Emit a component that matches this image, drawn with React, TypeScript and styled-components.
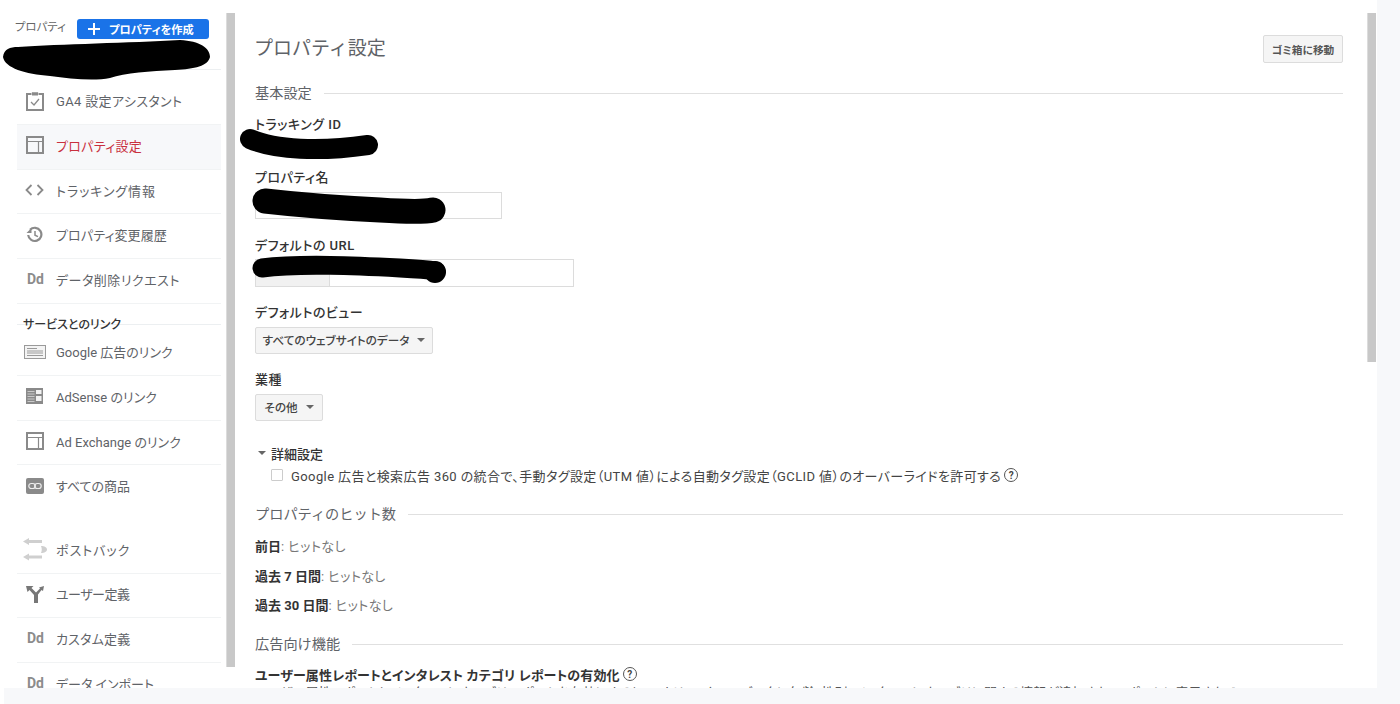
import React from "react";
import styled, { createGlobalStyle } from "styled-components";

const Global = createGlobalStyle`
  html, body { margin: 0; padding: 0; background: #f7f8fa; }
  body { font-family: Roboto, "Noto Sans CJK JP", sans-serif; color: #333; overflow: hidden; font-feature-settings: "palt"; }
`;

const Page = styled.div`
  width: 1400px;
  height: 704px;
  overflow: hidden;
  background: #f7f8fa;
`;
const Frame = styled.div`
  position: relative;
  width: 1377px;
  height: 688px;
  background: #fff;
  overflow: hidden;
  display: flex;
`;
const Gutter = styled.div`
  width: 4px;
  height: 16px;
  background: #fff;
`;
const Nav = styled.nav`
  width: 226px;
  flex: none;
  padding-left: 17px;
  box-sizing: border-box;
`;
const NavHeader = styled.div`
  height: 70px;
  margin-left: -17px;
  margin-bottom: 10.6px;
  padding: 19px 17px 0 15px;
  box-sizing: border-box;
  display: flex;
  align-items: flex-start;
  justify-content: space-between;
  position: relative;
  &::after {
    content: "";
    position: absolute;
    left: 17px;
    right: 5px;
    bottom: 0;
    border-bottom: 1px solid #eceff1;
  }
`;
const NavTitle = styled.span`
  font-size: 11.4px;
  line-height: 16px;
  color: #666;
`;
const CreateButton = styled.div`
  width: 132px;
  height: 20px;
  background: #1a73e8;
  border-radius: 3px;
  color: #fff;
  font-size: 11.2px;
  font-weight: 700;
  display: flex;
  align-items: center;
  padding-left: 11px;
  gap: 9px;
  box-sizing: border-box;
`;
const Row = styled.div<{ $active?: boolean; $plain?: boolean; $spread?: number }>`
  height: 44.6px;
  width: 204px;
  padding-bottom: 3px;
  box-sizing: border-box;
  display: flex;
  align-items: center;
  border-bottom: 1px solid ${(p) => (p.$plain ? "transparent" : "#f1f3f4")};
  background: ${(p) => (p.$active ? "#f7f8fa" : "transparent")};
  color: ${(p) => (p.$active ? "#c9303e" : "#5f6368")};
  font-size: 13px;
  letter-spacing: ${(p) => p.$spread ?? 0}px;
`;
const IconSlot = styled.span`
  width: 35px;
  margin-right: 4px;
  flex: none;
  display: flex;
  justify-content: center;
  color: #8a8a8a;
`;
const Dd = styled.span`
  font-family: Roboto, sans-serif;
  font-size: 14px;
  font-weight: 700;
  letter-spacing: 0;
  color: #8c8c8c;
  line-height: 16px;
  margin-left: 2px;
`;
const SectionLabel = styled.div`
  width: 204px;
  height: 21px;
  padding: 11px 0 0 6px;
  box-sizing: border-box;
  font-size: 12px;
  line-height: 20px;
  font-weight: 500;
  color: #333;
  border-bottom: 1px solid #eceff1;
  margin-bottom: 7px;
  white-space: nowrap;
`;
const NavGap = styled.div`
  height: 19px;
`;
const Track = styled.div<{ $height: number }>`
  width: 9px;
  flex: none;
  margin-top: 13px;
  height: ${(p) => p.$height}px;
  background: #c8c8c8;
  border-left: 1px solid #dcdcdc;
  box-sizing: border-box;
`;
const Main = styled.main`
  flex: none;
  width: 1132px;
  padding: 34px 24px 0 20px;
  box-sizing: border-box;
`;
const TitleRow = styled.div`
  display: flex;
  align-items: flex-start;
  justify-content: space-between;
  height: 47px;
`;
const Title = styled.h1`
  margin: 2px 0 0 -1px;
  font-size: 19px;
  line-height: 26px;
  font-weight: 400;
  color: #5f6368;
  font-feature-settings: normal;
`;
const GhostButton = styled.div`
  width: 80px;
  height: 28px;
  margin-top: 1px;
  background: #f5f5f5;
  border: 1px solid #dcdcdc;
  border-radius: 2px;
  box-sizing: border-box;
  display: flex;
  align-items: center;
  justify-content: center;
  font-size: 10.7px;
  font-weight: 700;
  color: #555;
`;
const Section = styled.div<{ $top?: number }>`
  display: flex;
  align-items: center;
  gap: 12px;
  height: 22px;
  margin-top: ${(p) => p.$top ?? 0}px;
  font-size: 14.2px;
  font-feature-settings: normal;
  color: #5f6368;
  white-space: nowrap;
  &::after {
    content: "";
    flex: 1;
    margin-top: 2px;
    border-top: 1px solid #e0e0e0;
  }
`;
const Label = styled.div<{ $top: number }>`
  margin-top: ${(p) => p.$top}px;
  font-size: 13px;
  letter-spacing: 0.5px;
  line-height: 18px;
  font-weight: 500;
  color: #333;
`;
const TextField = styled.div<{ $width: number; $top: number; $height: number }>`
  width: ${(p) => p.$width}px;
  height: ${(p) => p.$height}px;
  margin-top: ${(p) => p.$top}px;
  border: 1px solid #dcdcdc;
  box-sizing: border-box;
  display: flex;
`;
const FieldPrefix = styled.div`
  width: 73px;
  background: #f1f1f1;
  border-right: 1px solid #dcdcdc;
`;
const SelectBox = styled.div<{ $width: number }>`
  width: ${(p) => p.$width}px;
  height: 27px;
  margin-top: 5px;
  padding-bottom: 2px;
  background: #f5f5f5;
  border: 1px solid #dcdcdc;
  border-radius: 2px;
  box-sizing: border-box;
  display: flex;
  align-items: center;
  justify-content: center;
  gap: 8px;
  font-size: 11.6px;
  font-weight: 500;
  color: #444;
`;
const Caret = styled.span`
  width: 0;
  height: 0;
  border-left: 4px solid transparent;
  border-right: 4px solid transparent;
  border-top: 4px solid #666;
`;
const Disclosure = styled.div`
  margin-top: 23px;
  padding-left: 3px;
  height: 18px;
  display: flex;
  align-items: center;
  gap: 5px;
  font-size: 13px;
  font-weight: 500;
  color: #333;
`;
const CheckRow = styled.div`
  margin-top: 4px;
  padding-left: 16px;
  height: 18px;
  display: flex;
  align-items: center;
  gap: 8px;
  font-size: 13px;
  letter-spacing: 0.4px;
  color: #444;
  white-space: nowrap;
`;
const CheckText = styled.span`
  display: inline-flex;
  align-items: center;
`;
const Checkbox = styled.span`
  width: 12px;
  height: 12px;
  border: 1px solid #ccc;
  border-radius: 1px;
  box-sizing: border-box;
`;
const Help = styled.span`
  width: 14px;
  height: 14px;
  border: 1.5px solid #555;
  border-radius: 50%;
  box-sizing: border-box;
  display: inline-flex;
  align-items: center;
  justify-content: center;
  font-family: Roboto, sans-serif;
  font-size: 10px;
  font-weight: 700;
  letter-spacing: 0;
  color: #444;
  margin-left: 3px;
  flex: none;
`;
const Stat = styled.div<{ $top: number }>`
  margin-top: ${(p) => p.$top}px;
  height: 18px;
  line-height: 18px;
  font-size: 13px;
  letter-spacing: 0.4px;
  color: #777;
  b { color: #333; font-weight: 700; letter-spacing: 0; }
`;
const BoldLine = styled.div`
  margin-top: 11px;
  height: 18px;
  display: flex;
  align-items: center;
  font-size: 13px;
  letter-spacing: 0.13px;
  font-weight: 700;
  color: #333;
  white-space: nowrap;
`;
const Clipped = styled.div`
  margin-top: 1px;
  font-size: 13px;
  line-height: 18px;
  color: #555;
  white-space: nowrap;
  width: 985px;
  overflow: hidden;
`;
const Redactions = styled.svg`
  position: absolute;
  left: 0;
  top: 0;
  pointer-events: none;
`;

const Stroke = { fill: "none", stroke: "currentColor", strokeWidth: 2 };

const ClipboardIcon = () => (
  <svg width="18" height="20" viewBox="0 0 18 20" {...Stroke}>
    <path d="M5 3H1v16h16V3h-4" />
    <path d="M6 4V1.800h6V4z" fill="currentColor" strokeWidth="1" />
    <path d="M5 11l3 3 5-6" strokeWidth="1.300" />
  </svg>
);
const PanelIcon = () => (
  <svg width="18" height="18" viewBox="0 0 18 18" {...Stroke}>
    <rect x="1" y="1" width="16" height="16" />
    <path d="M1 5.500h16M12.500 5.500V17" strokeWidth="1.200" />
  </svg>
);
const CodeIcon = () => (
  <svg width="19" height="12" viewBox="0 0 19 12" fill="none" stroke="currentColor" strokeWidth="1.800">
    <path d="M6.500 1L1.500 6l5 5M12.500 1l5 5-5 5" />
  </svg>
);
const HistoryIcon = () => (
  <svg width="17" height="17" viewBox="0 0 17 17" {...Stroke}>
    <path d="M2.200 9A6.600 6.600 0 1 0 4 3.800" strokeWidth="2.200" />
    <path d="M0.500 7h5V2z" fill="currentColor" stroke="none" />
    <path d="M9 5v4.200l3 1.500" strokeWidth="1.500" />
  </svg>
);
const AdsIcon = () => (
  <svg width="22" height="14" viewBox="0 0 22 14" fill="none" stroke="#9a9a9a">
    <rect x=".5" y=".5" width="21" height="13" fill="#f4f4f4" />
    <path d="M3 3.500h10M3 6h16M3 8h16M3 10.500h16" strokeWidth="1.200" />
  </svg>
);
const AdsenseIcon = () => (
  <svg width="17" height="16" viewBox="0 0 17 16" fill="#8a8a8a">
    <rect width="17" height="16" />
    <path d="M10 2h5.500v4H10zM10 8h5.500v5H10z" fill="#f2f2f2" />
    <path d="M1.500 3.500h7M1.500 6h7M1.500 8.500h7M1.500 11h7M1.500 13.500h7" stroke="#c9c9c9" />
  </svg>
);
const LinkIcon = () => (
  <svg width="18" height="16" viewBox="0 0 18 16">
    <rect width="18" height="16" rx="2" fill="#8a8a8a" />
    <rect x="2.800" y="5.500" width="6.500" height="5" rx="2.500" fill="none" stroke="#eee" strokeWidth="1.200" />
    <rect x="8.700" y="5.500" width="6.500" height="5" rx="2.500" fill="none" stroke="#eee" strokeWidth="1.200" />
  </svg>
);
const PostbackIcon = () => (
  <svg width="24" height="23" viewBox="0 0 24 23" fill="#cfcfcf">
    <path d="M0 3.500L6 0v2h13v3H6v2zM0 19l6-3.500v2h13v3H6v2z" />
    <path d="M18 8c3.500 0 6 1.500 6 3.500S21.500 15 18 15c1-2.300 1-4.700 0-7z" />
  </svg>
);
const ForkIcon = () => (
  <svg width="18" height="18" viewBox="0 0 18 18" fill="#777">
    <path d="M0 1h7.500L5.500 3 10 7.500 14 3.500 13 2.500 18 1l-1 5-1.500-1L12 9.500V18H8v-8L3.500 5 1.500 7z" />
  </svg>
);

const Icons: Record<string, React.ReactNode> = {
  clip: <ClipboardIcon />,
  panel: <PanelIcon />,
  code: <CodeIcon />,
  history: <HistoryIcon />,
  dd: <Dd>Dd</Dd>,
  ads: <AdsIcon />,
  adsense: <AdsenseIcon />,
  link: <LinkIcon />,
  post: <PostbackIcon />,
  fork: <ForkIcon />,
};

type NavRowProps = { icon: string; label: string; active?: boolean; plain?: boolean; spread?: number };
const NavRow = ({ icon, label, active, plain, spread }: NavRowProps) => (
  <Row $active={active} $plain={plain} $spread={spread}>
    <IconSlot>{Icons[icon]}</IconSlot>
    <span>{label}</span>
  </Row>
);

export default function App() {
  return (
    <Page>
      <Global />
      <Frame>
        <Nav>
          <NavHeader>
            <NavTitle>プロパティ</NavTitle>
            <CreateButton>
              <svg width="12" height="12" viewBox="0 0 12 12" stroke="#fff" strokeWidth="2">
                <path d="M6 0v12M0 6h12" />
              </svg>
              プロパティを作成
            </CreateButton>
          </NavHeader>
          <NavRow icon="clip" label="GA4 設定アシスタント" spread={0.35} />
          <NavRow icon="panel" label="プロパティ設定" active spread={0.3} />
          <NavRow icon="code" label="トラッキング情報" spread={0.9} />
          <NavRow icon="history" label="プロパティ変更履歴" spread={0.1} />
          <NavRow icon="dd" label="データ削除リクエスト" spread={0.5} />
          <SectionLabel>サービスとのリンク</SectionLabel>
          <NavRow icon="ads" label="Google 広告のリンク" />
          <NavRow icon="adsense" label="AdSense のリンク" />
          <NavRow icon="panel" label="Ad Exchange のリンク" />
          <NavRow icon="link" label="すべての商品" plain />
          <NavGap />
          <NavRow icon="post" label="ポストバック" spread={1} />
          <NavRow icon="fork" label="ユーザー定義" spread={-0.5} />
          <NavRow icon="dd" label="カスタム定義" spread={0.2} />
          <NavRow icon="dd" label="データ インポート" />
        </Nav>
        <Track $height={654} />
        <Main>
          <TitleRow>
            <Title>プロパティ設定</Title>
            <GhostButton>ゴミ箱に移動</GhostButton>
          </TitleRow>
          <Section>基本設定</Section>
          <Label $top={13}>トラッキング ID</Label>
          <Label $top={35}>プロパティ名</Label>
          <TextField $width={247} $top={5} $height={27} />
          <Label $top={18}>デフォルトの URL</Label>
          <TextField $width={319} $top={4} $height={28}>
            <FieldPrefix />
          </TextField>
          <Label $top={17}>デフォルトのビュー</Label>
          <SelectBox $width={178}>
            すべてのウェブサイトのデータ
            <Caret />
          </SelectBox>
          <Label $top={17}>業種</Label>
          <SelectBox $width={68}>
            その他
            <Caret />
          </SelectBox>
          <Disclosure>
            <Caret />
            詳細設定
          </Disclosure>
          <CheckRow>
            <Checkbox />
            <CheckText>
              Google 広告と検索広告 360 の統合で、手動タグ設定（UTM 値）による自動タグ設定（GCLID 値）のオーバーライドを許可する
              <Help>?</Help>
            </CheckText>
          </CheckRow>
          <Section $top={18}>プロパティのヒット数</Section>
          <Stat $top={14}>
            <b>前日</b>: ヒットなし
          </Stat>
          <Stat $top={12}>
            <b>過去 7 日間</b>: ヒットなし
          </Stat>
          <Stat $top={11}>
            <b>過去 30 日間</b>: ヒットなし
          </Stat>
          <Section $top={17}>広告向け機能</Section>
          <BoldLine>
            ユーザー属性レポートとインタレスト カテゴリ レポートの有効化
            <Help>?</Help>
          </BoldLine>
          <Clipped>
            ユーザー属性レポートとインタレスト カテゴリ レポートを有効にすると、アナリティクスのデータに年齢、性別、インタレスト カテゴリに関する情報が追加され、レポートに表示されるようになります。
          </Clipped>
        </Main>
        <Track $height={349} />
        <Redactions width="1377" height="688" viewBox="0 0 1377 688">
          <path
            d="M3 57C4 49 10 47 18 47C60 44 130 43 180 40C200 41 210 48 210 57C208 66 195 69 175 70C150 71 125 73 110 78C95 81 70 79 50 76C25 74 5 68 3 57Z"
            fill="#000"
          />
          <g fill="none" stroke="#000" strokeLinecap="round">
            <path d="M250 139C275 150 320 152 368 145" strokeWidth="20" />
            <path d="M265 201C300 205 340 208 380 210C410 212 425 212 433 210" strokeWidth="25" />
            <path d="M262 268C300 263 360 266 400 268C420 269 430 270 436 271" strokeWidth="19" />
          </g>
          <circle cx="435" cy="272" r="11" fill="#000" />
        </Redactions>
      </Frame>
      <Gutter />
    </Page>
  );
}
